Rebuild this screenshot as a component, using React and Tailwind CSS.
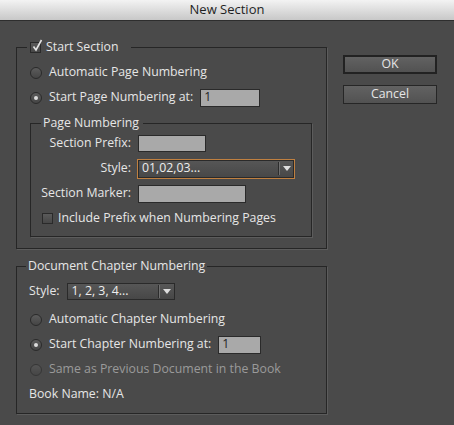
import React from 'react';

const Radio = ({ on }) => (
    <span className="flex h-[12px] w-[12px] shrink-0 items-center justify-center rounded-full border border-[#2a2a2a] bg-gradient-to-b from-[#5c5c5c] to-[#454545]">
        {on && <span className="h-[4px] w-[4px] rounded-full bg-[#dcdcdc]" />}
    </span>
);

const Check = ({ on }) => (
    <span className="relative block h-[11px] w-[11px] shrink-0 border border-[#2a2a2a] bg-gradient-to-b from-[#5a5a5a] to-[#474747]">
        {on && (
            <svg className="absolute -top-[4px] left-[1px]" width="11" height="13" viewBox="0 0 11 13">
                <path d="M1.5 7.5 L4 11 L9.5 1" fill="none" stroke="#e4e4e4" strokeWidth="1.6" />
            </svg>
        )}
    </span>
);

const Field = ({ w, h = 17, value }) => (
    <div
        className="flex items-center border border-[#2a2a2a] bg-[#a9a9a9] pl-[3px] text-[#1e1e1e]"
        style={{ width: w, height: h }}
    >
        {value}
    </div>
);

const Dropdown = ({ w, h, value, focus }) => (
    <div
        className={
            'flex items-center bg-gradient-to-b from-[#575757] to-[#474747] pl-[4px] text-[#ededed] ' +
            (focus ? 'border border-[#c08040] shadow-[inset_0_0_0_1px_#2a2a2a]' : 'border border-[#2a2a2a]')
        }
        style={{ width: w, height: h }}
    >
        <span className="flex-1">{value}</span>
        <span className="h-[13px] w-[1px] bg-[#2c2c2c]" />
        <span className="h-[13px] w-[1px] bg-[#707070]" />
        <svg className="mx-[3px]" width="8" height="5" viewBox="0 0 8 5">
            <polygon points="0,0 8,0 4,5" fill="#dedede" />
        </svg>
    </div>
);

const Row = ({ children, className = '' }) => (
    <div className={'flex h-[25px] items-center ' + className}>{children}</div>
);

const App = () => {
    return (
        <div className="h-[425px] w-[454px] overflow-hidden bg-[#4a4a4a] font-['Open_Sans','Liberation_Sans',sans-serif] text-[12.3px] text-[#e6e6e6]">
            <div className="flex h-[21px] items-center justify-center border-b border-[#2e2e2e] bg-gradient-to-b from-[#f3f3f3] to-[#c8c8c8] text-[13px] text-[#1f1f1f]">
                New Section
            </div>

            <div className="flex pl-[16px] pt-[18px]">
                <div className="w-[311px]">
                    {/* Start Section */}
                    <fieldset className="border border-[#262626] shadow-[1px_1px_0_#5c5c5c] pb-[11px]">
                        <legend className="ml-[10px] flex h-[16px] items-center pl-[3px] pr-[12px]">
                            <Check on />
                            <span className="ml-[5px]">Start Section</span>
                        </legend>
                        <div className="pl-[13px] pt-[5px]">
                            <Row>
                                <Radio />
                                <span className="ml-[7px]">Automatic Page Numbering</span>
                            </Row>
                            <Row>
                                <Radio on />
                                <span className="ml-[7px]">Start Page Numbering at:</span>
                                <div className="ml-[7px]">
                                    <Field w={60} h={18} value="1" />
                                </div>
                            </Row>

                            <fieldset className="mt-[5px] w-[282px] border border-[#262626] shadow-[1px_1px_0_#5c5c5c] pb-[5px]">
                                <legend className="ml-[10px] flex h-[16px] items-center pl-[2px] pr-[4px]">
                                    Page Numbering
                                </legend>
                                <Row>
                                    <span className="w-[100px] text-right">Section Prefix:</span>
                                    <div className="ml-[7px]">
                                        <Field w={68} h={17} />
                                    </div>
                                </Row>
                                <Row>
                                    <span className="w-[100px] text-right">Style:</span>
                                    <div className="ml-[6px]">
                                        <Dropdown w={158} h={20} value="01,02,03..." focus />
                                    </div>
                                </Row>
                                <Row>
                                    <span className="w-[100px] text-right">Section Marker:</span>
                                    <div className="ml-[7px]">
                                        <Field w={108} h={18} />
                                    </div>
                                </Row>
                                <Row className="pl-[11px]">
                                    <Check />
                                    <span className="ml-[5px]">Include Prefix when Numbering Pages</span>
                                </Row>
                            </fieldset>
                        </div>
                    </fieldset>

                    {/* Document Chapter Numbering */}
                    <fieldset className="mt-[9px] border border-[#262626] shadow-[1px_1px_0_#5c5c5c] pb-[6px]">
                        <legend className="ml-[9px] flex h-[16px] items-center px-[2px]">
                            Document Chapter Numbering
                        </legend>
                        <div className="pl-[12px] pt-[4px]">
                            <div className="flex h-[26px] items-center">
                                <span>Style:</span>
                                <div className="ml-[7px]">
                                    <Dropdown w={108} h={17} value="1, 2, 3, 4..." />
                                </div>
                            </div>
                            <Row className="mt-[3px] pl-[1px]">
                                <Radio />
                                <span className="ml-[7px]">Automatic Chapter Numbering</span>
                            </Row>
                            <Row className="pl-[1px]">
                                <Radio on />
                                <span className="ml-[7px]">Start Chapter Numbering at:</span>
                                <div className="ml-[7px]">
                                    <Field w={43} h={18} value="1" />
                                </div>
                            </Row>
                            <Row className="pl-[1px]">
                                <span className="opacity-60">
                                    <Radio />
                                </span>
                                <span className="ml-[7px] text-[#9a9a9a]">Same as Previous Document in the Book</span>
                            </Row>
                            <Row>
                                <span>Book Name: N/A</span>
                            </Row>
                        </div>
                    </fieldset>
                </div>

                <div className="ml-[16px] pt-[16px]">
                    <button className="flex h-[19px] w-[94px] items-center justify-center border-2 border-[#222] bg-gradient-to-b from-[#626262] to-[#525252] text-[#e6e6e6]">
                        OK
                    </button>
                    <button className="mt-[11px] flex h-[19px] w-[94px] items-center justify-center border border-[#262626] bg-gradient-to-b from-[#626262] to-[#525252] text-[#e6e6e6]">
                        Cancel
                    </button>
                </div>
            </div>
        </div>
    );
};

export default App;
